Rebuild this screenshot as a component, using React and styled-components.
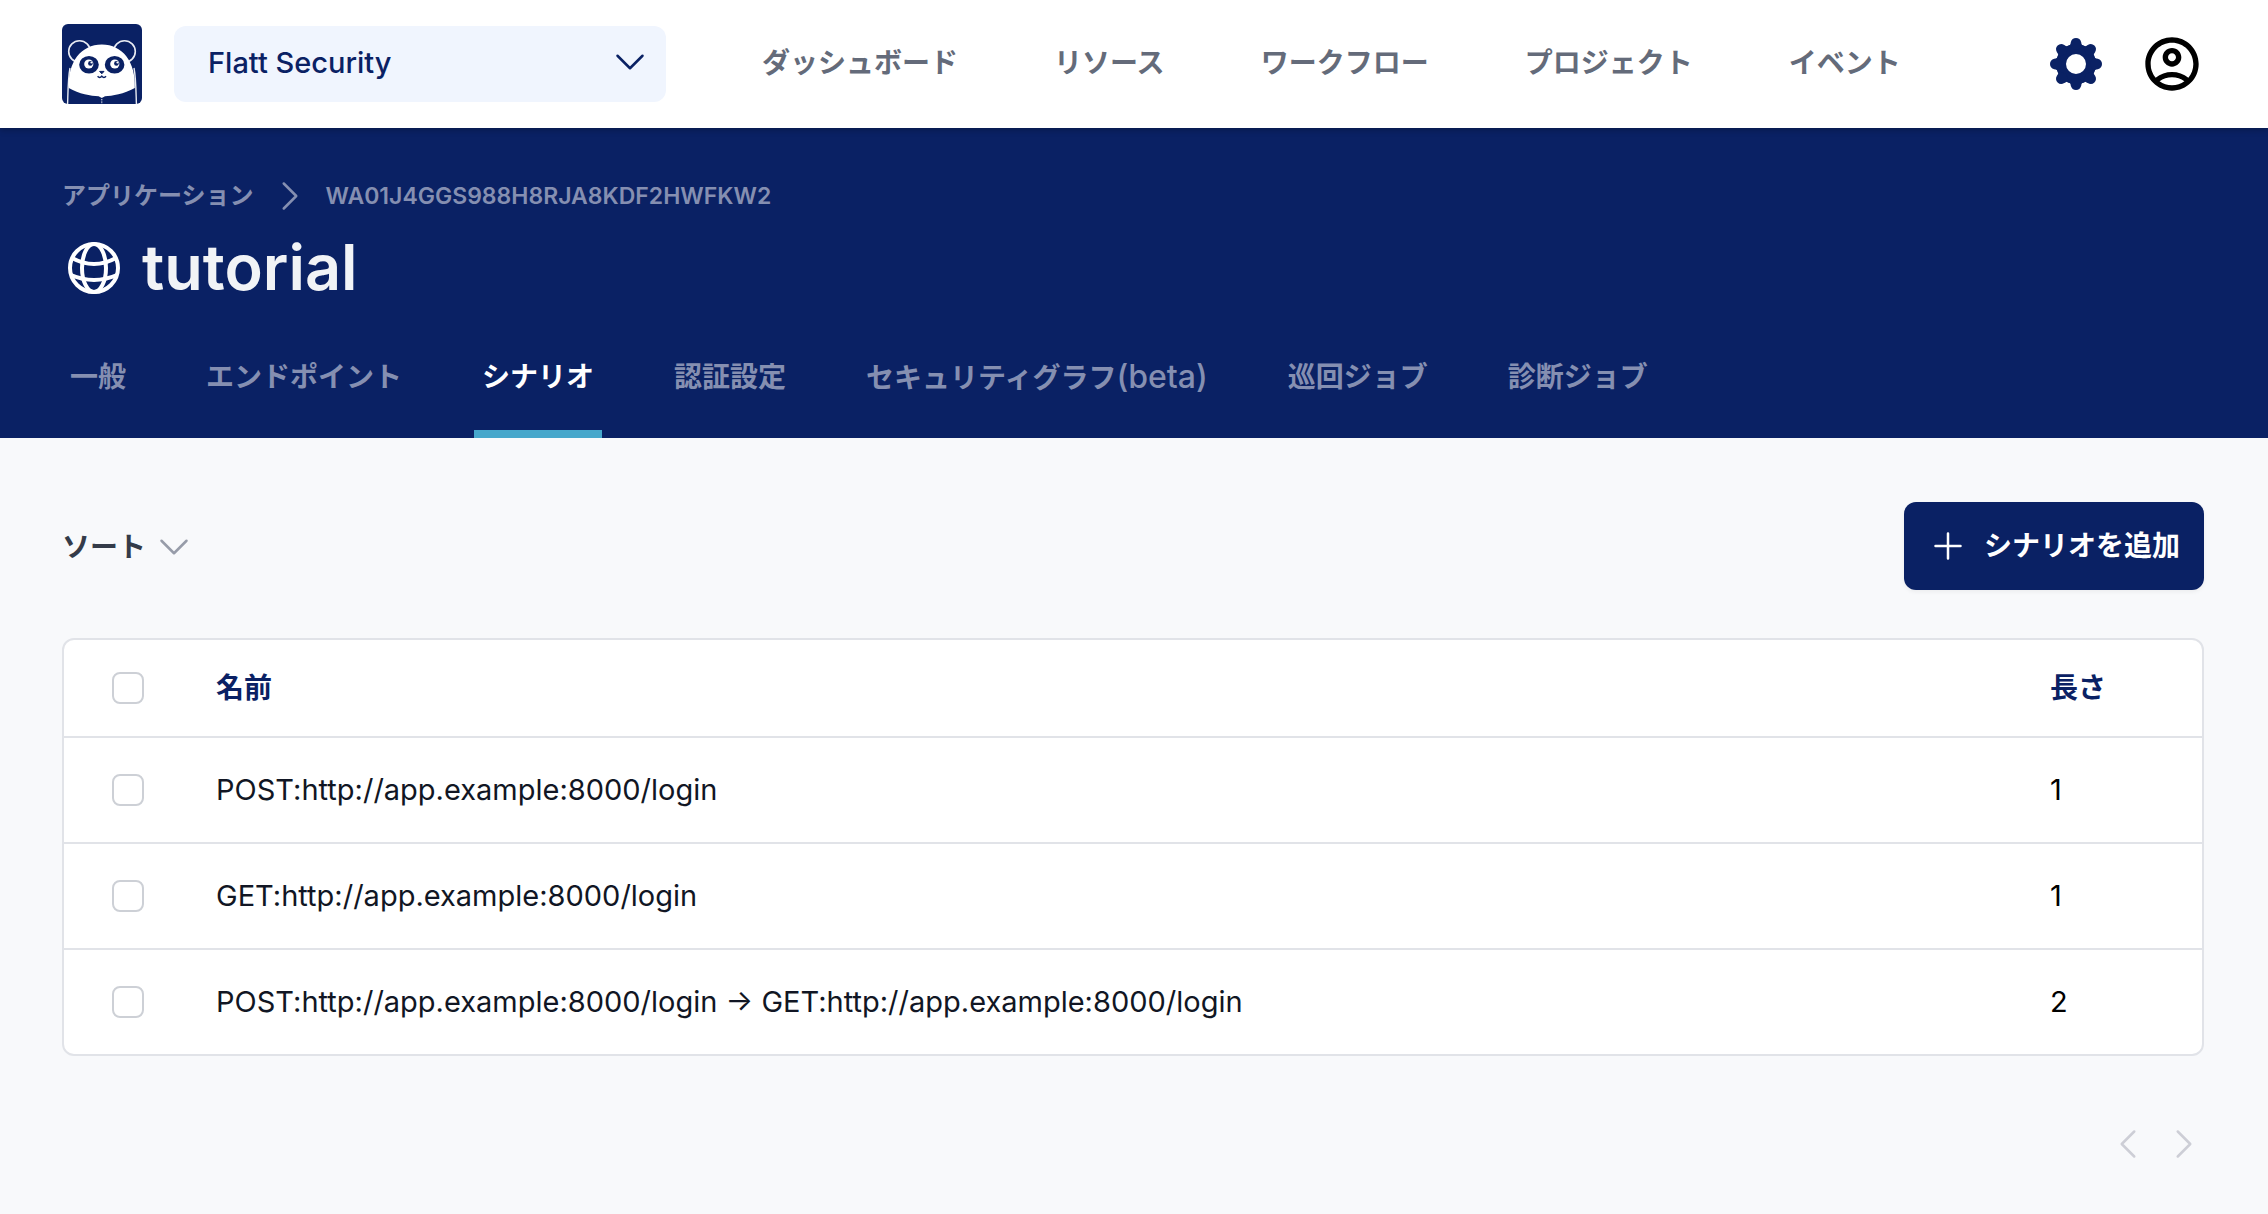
import React, { Component } from 'react'
import styled, { createGlobalStyle } from 'styled-components'
import { MdOutlineAccountCircle } from 'react-icons/md'

const navy = '#0a2164'

const GlobalStyle = createGlobalStyle`
  * {
    box-sizing: border-box;
  }
  body {
    margin: 0;
    background: #f8f9fb;
    color: #111624;
    font-family: Inter, 'Noto Sans CJK JP', sans-serif;
    font-size: 28px;
    line-height: 40px;
  }
  button, select {
    font: inherit;
    color: inherit;
    border: 0;
    padding: 0;
    background: none;
    cursor: pointer;
  }
  a {
    color: inherit;
    text-decoration: none;
  }
`

const Header = styled.header`
  position: relative;
  display: flex;
  align-items: center;
  height: 128px;
  padding: 0 64px 0 62px;
  background: #fff;
  box-shadow: 0 2px 6px rgba(0, 0, 0, 0.25);
`

const LogoLink = styled.a`
  display: flex;
  margin-right: 32px;
`

const TeamPicker = styled.label`
  display: grid;
  align-items: center;
  justify-items: end;
  width: 492px;
  height: 76px;
  margin-right: 96px;
  border-radius: 12px;
  background: #f0f5fe;
  color: ${navy};

  select, svg {
    grid-area: 1 / 1;
  }
  select {
    width: 100%;
    height: 100%;
    padding: 0 64px 2px 34px;
    appearance: none;
    font-size: 29px;
    font-weight: 500;
  }
  svg {
    margin: 0 16px 4px 0;
    pointer-events: none;
  }
`

const MainNav = styled.nav`
  display: flex;
  flex: 1;
  gap: 96px;
  padding-bottom: 2px;
  color: #646b7a;
  font-weight: 600;
  white-space: nowrap;
`

const HeaderActions = styled.div`
  display: flex;
  gap: 32px;
`

const IconButton = styled.button`
  display: flex;
  color: ${props => props.$color};
`

const Hero = styled.section`
  display: flex;
  flex-direction: column;
  padding: 48px 64px 0 62px;
  background: ${navy};
  color: #fff;
`

const Breadcrumb = styled.nav`
  display: flex;
  align-items: center;
  gap: 16px;
  color: #858fb1;
  font-size: 24px;
  font-weight: 600;
`

const AppId = styled.a`
  font-size: 23px;
`

const TitleRow = styled.div`
  display: flex;
  align-items: center;
  gap: 20px;
  margin-top: 16px;
  padding-left: 4px;
`

const Title = styled.h1`
  margin: 0;
  padding-bottom: 2px;
  color: #f1f3f6;
  font-size: 63px;
  font-weight: 600;
  line-height: 70px;
`

const Tabs = styled.nav`
  display: flex;
  gap: 64px;
  margin-top: 32px;
`

const Tab = styled.a`
  height: 102px;
  padding: 21px 8px 0;
  border-bottom: 8px solid ${props => props.$active ? '#46a7cb' : 'transparent'};
  color: ${props => props.$active ? '#fff' : '#858fb1'};
  font-weight: 600;
  white-space: nowrap;
`

const TabNote = styled.span`
  font-size: 32px;
  font-weight: 500;
`

const Content = styled.main`
  padding: 64px 64px 0 62px;
`

const Toolbar = styled.div`
  display: flex;
  align-items: center;
  justify-content: space-between;
  margin-bottom: 48px;
`

const SortButton = styled.button`
  display: flex;
  align-items: center;
  gap: 8px;
  padding-top: 2px;
  color: #343b49;
  font-weight: 600;

  svg {
    color: #979ca9;
  }
`

const AddButton = styled.button`
  display: flex;
  align-items: center;
  gap: 16px;
  height: 88px;
  padding: 0 24px;
  border-radius: 12px;
  background: ${navy};
  box-shadow: 0 2px 4px rgba(0, 0, 0, 0.05);
  color: #fff;
  font-weight: 600;
`

const TableCard = styled.div`
  overflow: hidden;
  border: 2px solid #e1e3e8;
  border-radius: 12px;
  background: #fff;
`

const ScenarioTable = styled.table`
  width: 100%;
  border-collapse: separate;
  border-spacing: 0;
  table-layout: fixed;

  th, td {
    padding: 0;
    text-align: left;
  }
  th {
    height: 96px;
    color: ${navy};
    font-weight: 600;
  }
  td {
    height: 106px;
    border-top: 2px solid #e1e3e8;
    font-size: 29px;
  }
`

const CheckCol = styled.col`
  width: 152px;
`

const LengthCol = styled.col`
  width: 152px;
`

const LengthCell = styled.td`
  color: #000;
`

const Checkbox = styled.input.attrs({ type: 'checkbox' })`
  display: block;
  width: 32px;
  height: 32px;
  margin: 0 0 0 48px;
  appearance: none;
  border: 2px solid #cdd0d6;
  border-radius: 8px;
  background: #fff;

  &:checked {
    background: ${navy};
  }
`

const Pager = styled.nav`
  display: flex;
  justify-content: flex-end;
  gap: 16px;
  margin-top: 68px;
`

const iconPaths = {
  down: 'M19.5 8.25 12 15.75 4.5 8.25',
  left: 'M15.75 19.5 8.25 12l7.5-7.5',
  right: 'M8.25 4.5l7.5 7.5-7.5 7.5',
  plus: 'M12 4.5v15m7.5-7.5h-15'
}

const LineIcon = ({ name }) => (
  <svg width="40" height="40" viewBox="0 0 24 24" fill="none" stroke="currentColor" strokeWidth="1.5" strokeLinecap="round" strokeLinejoin="round" aria-hidden="true">
    <path d={iconPaths[name]} />
  </svg>
)

const PandaLogo = () => (
  <svg width="80" height="80" viewBox="0 0 80 80" aria-hidden="true">
    <rect width="80" height="80" rx="6" fill={navy} />
    <g fill={navy} stroke="#e9ecf3" strokeWidth="1.6">
      <circle cx="17.5" cy="27.5" r="10.8" />
      <circle cx="62.5" cy="27.5" r="10.8" />
    </g>
    <path d="M8 44C6 54 6 68 5.6 80M72 44c2 10 2 24 2.4 36" fill="none" stroke="#e9ecf3" strokeWidth="1.4" />
    <path d="M6.8 64C5.6 38 19 20.4 39.8 20.4S74 38 72.8 64C62 70 50 72 43 72.2L39.8 74l-3.2-1.8C29 72 17 70 6.8 64z" fill="#fff" />
    <ellipse cx="27" cy="40.8" rx="9.8" ry="8.8" fill={navy} />
    <ellipse cx="52.6" cy="40.8" rx="9.8" ry="8.8" fill={navy} />
    <circle cx="26.8" cy="40" r="4.6" fill="#fff" />
    <circle cx="52.8" cy="40" r="4.6" fill="#fff" />
    <circle cx="28.4" cy="39.4" r="2.3" fill={navy} />
    <circle cx="54.4" cy="39.4" r="2.3" fill={navy} />
    <circle cx="29.4" cy="38.6" r="1" fill="#fff" />
    <circle cx="55.4" cy="38.6" r="1" fill="#fff" />
    <path d="M37.6 47.4h4.4l-2.2 2.4z" fill={navy} stroke={navy} strokeLinejoin="round" />
    <path d="M35.6 52.2q2 2.4 4.2 0q2.2 2.4 4.2 0" fill="none" stroke={navy} strokeWidth="1.5" />
    <path d="M39.8 75v5" stroke="#e9ecf3" strokeWidth="1" strokeDasharray="1.4 1" />
  </svg>
)

const gearAngles = [0, 45, 90, 135, 180, 225, 270, 315]

const GearIcon = () => (
  <svg width="64" height="64" viewBox="-32 -32 64 64" aria-hidden="true">
    <circle r="15" fill="none" stroke="currentColor" strokeWidth="10" />
    {gearAngles.map(angle => (
      <path key={angle} d="M-8.2-17.8C-5.6-18.4-5.6-19.6-5.2-21.8Q-4-26 0-26T5.2-21.8C5.6-19.6 5.6-18.4 8.2-17.8L0-14z" fill="currentColor" transform={`rotate(${angle})`} />
    ))}
  </svg>
)

const GlobeIcon = () => (
  <svg width="56" height="56" viewBox="-28 -28 56 56" fill="none" stroke="currentColor" strokeWidth="4" aria-hidden="true">
    <circle r="24" />
    <ellipse rx="12" ry="24" />
    <path d="M-22-10Q0 2 22-10M-23 7Q0 17 23 7" />
  </svg>
)

const navItems = ['ダッシュボード', 'リソース', 'ワークフロー', 'プロジェクト', 'イベント']

const tabItems = [
  { label: '一般' },
  { label: 'エンドポイント' },
  { label: 'シナリオ' },
  { label: '認証設定' },
  { label: 'セキュリティグラフ', note: '(beta)' },
  { label: '巡回ジョブ' },
  { label: '診断ジョブ' }
]

const scenarios = [
  { id: 1, name: 'POST:http://app.example:8000/login', length: 1 },
  { id: 2, name: 'GET:http://app.example:8000/login', length: 1 },
  { id: 3, name: 'POST:http://app.example:8000/login → GET:http://app.example:8000/login', length: 2 }
]

class App extends Component {
  constructor (props) {
    super(props)
    this.toggleAll = this.toggleAll.bind(this)
    this.state = {
      tab: 'シナリオ',
      selected: []
    }
  }

  toggle (id) {
    const { selected } = this.state
    this.setState({
      selected: selected.includes(id) ? selected.filter(s => s !== id) : [...selected, id]
    })
  }

  toggleAll () {
    const all = this.state.selected.length === scenarios.length
    this.setState({ selected: all ? [] : scenarios.map(s => s.id) })
  }

  render () {
    const { tab, selected } = this.state
    return (
      <>
        <GlobalStyle />
        <Header>
          <LogoLink href="#home" aria-label="ホーム"><PandaLogo /></LogoLink>
          <TeamPicker>
            <select aria-label="チーム">
              <option>Flatt Security</option>
            </select>
            <LineIcon name="down" />
          </TeamPicker>
          <MainNav>
            {navItems.map(item => <a key={item} href="#nav">{item}</a>)}
          </MainNav>
          <HeaderActions>
            <IconButton $color={navy} aria-label="設定"><GearIcon /></IconButton>
            <IconButton $color="#000" aria-label="アカウント"><MdOutlineAccountCircle size={64} /></IconButton>
          </HeaderActions>
        </Header>
        <Hero>
          <Breadcrumb>
            <a href="#apps">アプリケーション</a>
            <LineIcon name="right" />
            <AppId href="#app">WA01J4GGS988H8RJA8KDF2HWFKW2</AppId>
          </Breadcrumb>
          <TitleRow>
            <GlobeIcon />
            <Title>tutorial</Title>
          </TitleRow>
          <Tabs>
            {tabItems.map(({ label, note }) => (
              <Tab key={label} href="#tab" $active={label === tab} onClick={() => this.setState({ tab: label })}>
                {label}{note && <TabNote>{note}</TabNote>}
              </Tab>
            ))}
          </Tabs>
        </Hero>
        <Content>
          <Toolbar>
            <SortButton>ソート<LineIcon name="down" /></SortButton>
            <AddButton><LineIcon name="plus" />シナリオを追加</AddButton>
          </Toolbar>
          <TableCard>
            <ScenarioTable>
              <colgroup>
                <CheckCol />
                <col />
                <LengthCol />
              </colgroup>
              <thead>
                <tr>
                  <th><Checkbox aria-label="すべて選択" checked={selected.length === scenarios.length} onChange={this.toggleAll} /></th>
                  <th>名前</th>
                  <th>長さ</th>
                </tr>
              </thead>
              <tbody>
                {scenarios.map(s => (
                  <tr key={s.id}>
                    <td><Checkbox aria-label={s.name} checked={selected.includes(s.id)} onChange={() => this.toggle(s.id)} /></td>
                    <td>{s.name}</td>
                    <LengthCell>{s.length}</LengthCell>
                  </tr>
                ))}
              </tbody>
            </ScenarioTable>
          </TableCard>
          <Pager>
            <IconButton $color="#cdced6" aria-label="前へ"><LineIcon name="left" /></IconButton>
            <IconButton $color="#cdced6" aria-label="次へ"><LineIcon name="right" /></IconButton>
          </Pager>
        </Content>
      </>
    )
  }
}

export default App
